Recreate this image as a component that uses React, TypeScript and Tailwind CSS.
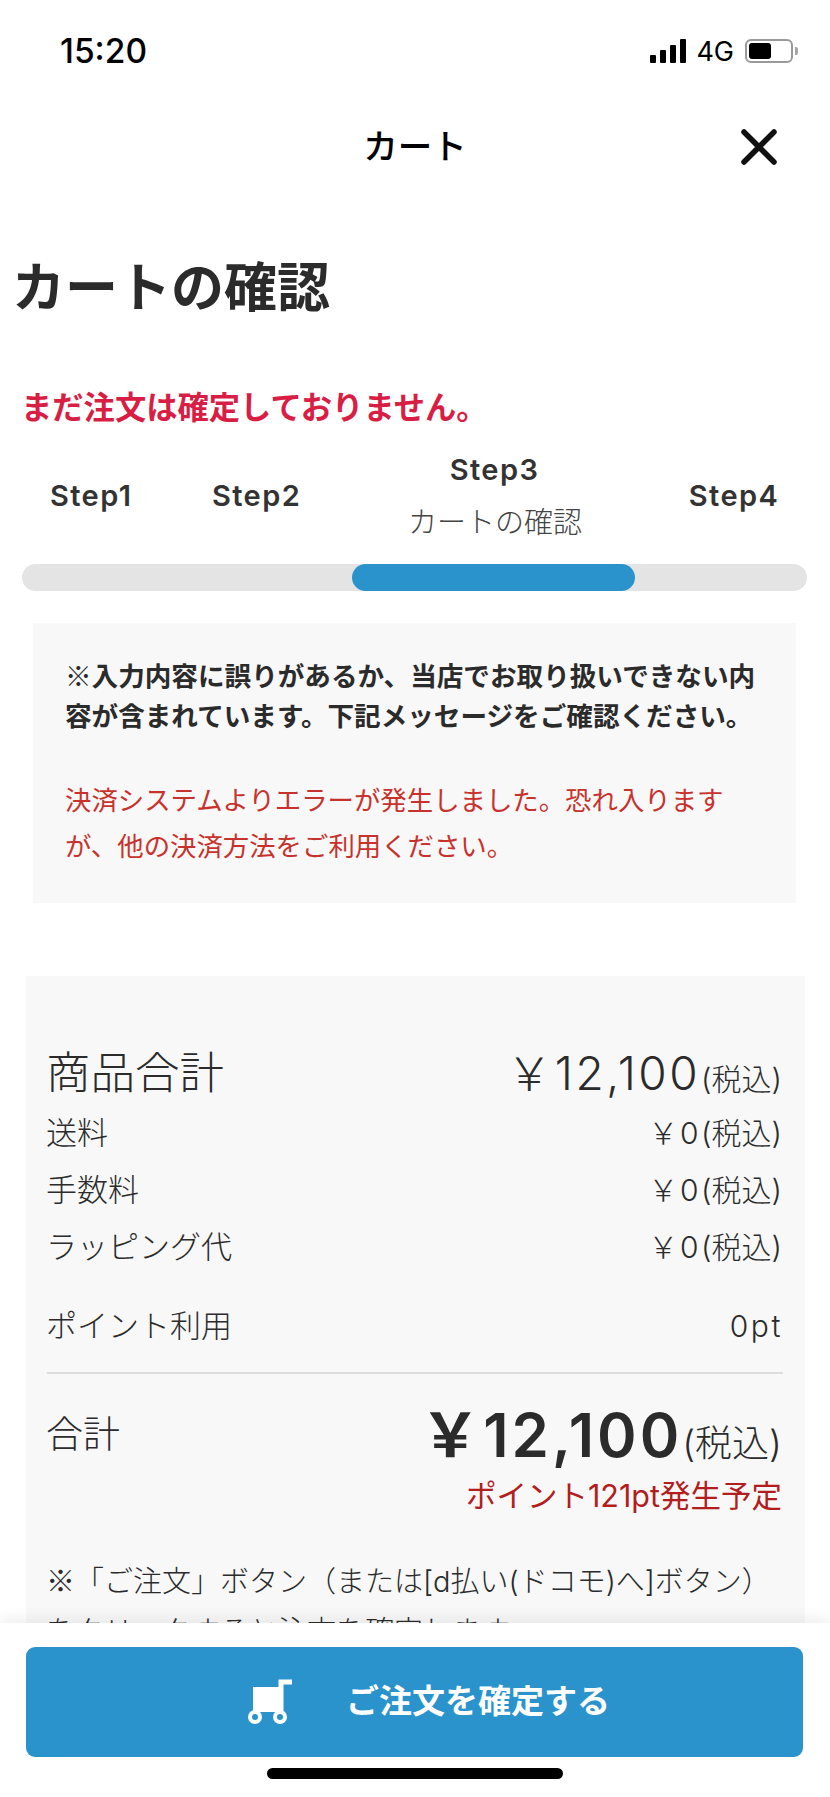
const FEE_ROWS = ["送料", "手数料", "ラッピング代"];

function Price({ value, big }: { value: string; big?: boolean }) {
  return (
    <span className="flex items-baseline">
      <span className={big ? "text-[46px] font-light tracking-[2.5px]" : "text-[30px] font-light tracking-[1.6px]"}>￥{value}</span>
      <span className="ml-[1px] text-[30px] font-light">(税込)</span>
    </span>
  );
}

function StatusBar() {
  return (
    <div className="flex h-[102px] items-center justify-between pr-[32px] pl-[60px] text-black">
      <span className="mt-[2px] text-[33.5px] leading-none font-medium">15:20</span>
      <div className="flex items-center">
        <div className="flex h-[24px] items-end gap-[4px]">
          <span className="h-[8px] w-[6px] rounded-[1px] bg-black" />
          <span className="h-[13px] w-[6px] rounded-[1px] bg-black" />
          <span className="h-[18px] w-[6px] rounded-[1px] bg-black" />
          <span className="h-[24px] w-[6px] rounded-[1px] bg-black" />
        </div>
        <span className="ml-[10px] text-[27px] leading-none">4G</span>
        <div className="ml-[11px] flex h-[24px] w-[48px] items-center rounded-[6px] border-2 border-[#9a9a9a] pl-[2px]">
          <span className="h-[16px] w-[22px] rounded-[3px] bg-black" />
        </div>
        <span className="ml-[2px] h-[8px] w-[3px] rounded-r-[2px] bg-[#a5a5a5]" />
      </div>
    </div>
  );
}

function CloseIcon() {
  return (
    <svg width="36" height="36" viewBox="0 0 36 36" fill="none" stroke="#111" strokeWidth="5.5" strokeLinecap="round">
      <path d="M3 3L33 33M33 3L3 33" />
    </svg>
  );
}

function CartIcon() {
  return (
    <svg width="46" height="46" viewBox="0 0 46 46" fill="none">
      <path d="M5 8H31V33H5Z" fill="#fff" />
      <path d="M44 3H33V35" stroke="#fff" strokeWidth="5" />
      <circle cx="7" cy="38" r="5" stroke="#fff" strokeWidth="4" />
      <circle cx="32" cy="38" r="5" stroke="#fff" strokeWidth="4" />
    </svg>
  );
}

export default function App() {
  return (
    <div className="relative h-[1797px] w-[830px] overflow-hidden bg-white font-['Inter','Noto_Sans_CJK_JP',sans-serif] text-[#2b2b2b]">
      <StatusBar />

      <div className="grid h-[89px] grid-cols-[1fr_auto_1fr] items-center text-black">
        <span />
        <span className="text-[34.5px] font-medium">カート</span>
        <div className="flex justify-end pr-[53px]">
          <CloseIcon />
        </div>
      </div>

      <h1 className="mt-[64px] pl-[12px] text-[53px] leading-[66px] font-bold">カートの確認</h1>

      <p className="mt-[65px] pl-[21px] text-[31.3px] leading-[44px] font-bold text-[#d81e45]">まだ注文は確定しておりません。</p>

      <div className="flex h-[134px] items-center pb-[3px] pl-[50px] text-[29px] font-semibold tracking-[1.4px] text-[#333]">
        <span className="w-[81px] text-center whitespace-nowrap">Step1</span>
        <span className="ml-[81px] w-[88px] text-center whitespace-nowrap">Step2</span>
        <div className="ml-[110px] w-[169px] text-center leading-[53px]">
          <div>Step3</div>
          <div className="ml-[-2px] text-[29px] font-light tracking-normal whitespace-nowrap text-[#444]">カートの確認</div>
        </div>
        <span className="ml-[109px] w-[92px] text-center whitespace-nowrap">Step4</span>
      </div>

      <div className="mx-[22px] flex h-[27px] w-[785px] rounded-full bg-[#e4e4e4]">
        <span className="ml-[330px] h-full w-[283px] rounded-full bg-[#2b93cb]" />
      </div>

      <div className="mt-[32px] ml-[33px] h-[280px] w-[763px] bg-[#f8f8f8] pt-[32px] pl-[32px] font-['Noto_Sans_CJK_JP',sans-serif] text-[26.6px]">
        <p className="leading-[40px] font-bold whitespace-nowrap">
          ※入力内容に誤りがあるか、当店でお取り扱いできない内
          <br />
          容が含まれています。下記メッセージをご確認ください。
        </p>
        <p className="mt-[41px] text-[26.4px] leading-[46px] whitespace-nowrap text-[#c8322c]">
          決済システムよりエラーが発生しました。恐れ入ります
          <br />
          が、他の決済方法をご利用ください。
        </p>
      </div>

      <div className="mt-[73px] ml-[26px] h-[700px] w-[779px] bg-[#f8f8f8] pt-[66px] pr-[23px] pl-[20px]">
        <div className="flex h-[63px] items-center justify-between">
          <span className="text-[44.5px] font-light">商品合計</span>
          <Price value="12,100" big />
        </div>
        {FEE_ROWS.map((label) => (
          <div key={label} className="flex h-[57px] items-center justify-between">
            <span className="text-[31px] font-light">{label}</span>
            <Price value="0" />
          </div>
        ))}
        <div className="mt-[22px] flex h-[57px] items-center justify-between text-[31px] font-light">
          <span>ポイント利用</span>
          <span className="mr-[-1px] text-[30px] tracking-[2.6px]">0pt</span>
        </div>
        <div className="mt-[17px] mr-[-1px] ml-[1px] h-[2px] bg-[#dddddd]" />
        <div className="mt-[23px] flex h-[76px] items-center justify-between">
          <span className="text-[37px] font-light">合計</span>
          <span className="flex items-baseline">
            <span className="text-[60px] font-semibold tracking-[3px]">￥12,100</span>
            <span className="text-[37px] font-light">(税込)</span>
          </span>
        </div>
        <p className="mt-[3px] text-right text-[30.5px] leading-[40px] text-[#b31d1d]">ポイント121pt発生予定</p>
        <p className="mt-[38px] text-[29px] leading-[50px] font-light whitespace-nowrap">
          <span className="font-['Noto_Sans_CJK_JP',sans-serif]">※</span>「ご注文」ボタン（または[d払い(ドコモ)へ]ボタン）
          <br />
          をクリックすると注文を確定します。
        </p>
      </div>

      <div className="absolute inset-x-0 bottom-0 h-[174px] bg-white pt-[24px] shadow-[0_-6px_12px_rgba(0,0,0,0.06)]">
        <button className="ml-[26px] flex h-[110px] w-[777px] items-center rounded-[9px] bg-[#2b93cb] pl-[222px] text-[33px] font-bold text-white">
          <CartIcon />
          <span className="ml-[52px]">ご注文を確定する</span>
        </button>
        <div className="mx-auto mt-[11px] h-[11px] w-[296px] rounded-full bg-black" />
      </div>
    </div>
  );
}
